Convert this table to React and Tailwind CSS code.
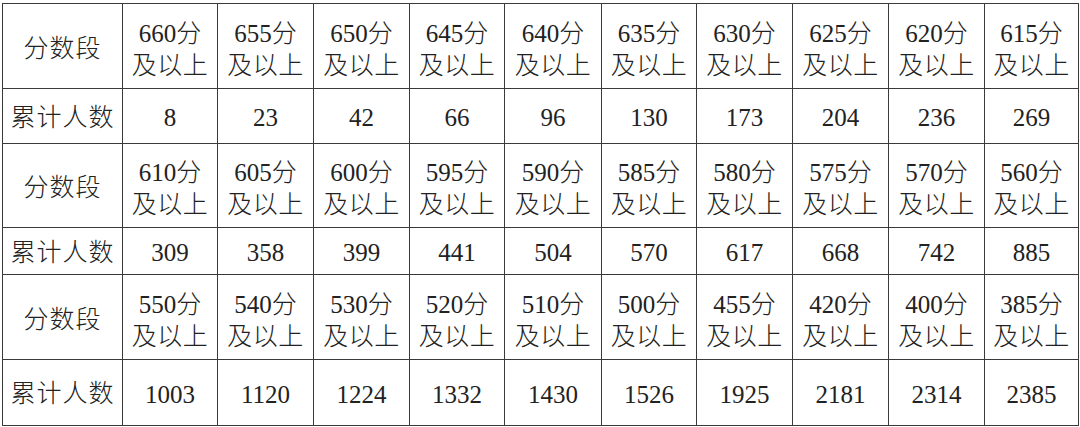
import { Fragment } from 'react'

const widths = [120, 95, 96, 96, 95, 97, 95, 96, 96, 96, 94]

const blocks = [
  {
    scores: [660, 655, 650, 645, 640, 635, 630, 625, 620, 615],
    counts: [8, 23, 42, 66, 96, 130, 173, 204, 236, 269],
    h1: 'h-[85px]',
    h2: 'h-[55px]',
  },
  {
    scores: [610, 605, 600, 595, 590, 585, 580, 575, 570, 560],
    counts: [309, 358, 399, 441, 504, 570, 617, 668, 742, 885],
    h1: 'h-[84px]',
    h2: 'h-[47px]',
  },
  {
    scores: [550, 540, 530, 520, 510, 500, 455, 420, 400, 385],
    counts: [1003, 1120, 1224, 1332, 1430, 1526, 1925, 2181, 2314, 2385],
    h1: 'h-[85px]',
    h2: 'h-[66px]',
  },
]

const cell = 'border border-[#3a3a3a] text-center align-middle p-0 text-[25px] leading-[32px] font-light'

export default function App() {
  return (
    <div
      className="bg-white w-[1080px] h-[427px] pt-[3px] pl-[2px] text-[#222]"
      style={{ fontFamily: '"Liberation Serif", "Noto Sans CJK SC", serif' }}
    >
      <table className="table-fixed border-collapse w-[1077px]">
        <colgroup>
          {widths.map((w, i) => (
            <col key={i} style={{ width: w }} />
          ))}
        </colgroup>
        <tbody>
          {blocks.map((b, bi) => (
            <Fragment key={bi}>
              <tr className={b.h1}>
                <td className={cell + ' tracking-[1px] pt-[5px]'}>分数段</td>
                {b.scores.map((s) => (
                  <td key={s} className={cell + ' pt-[7px]'}>
                    <div>{s}分</div>
                    <div className="tracking-[0.5px]">及以上</div>
                  </td>
                ))}
              </tr>
              <tr className={b.h2}>
                <td className={cell + ' tracking-[1px] pt-[3px]'}>累计人数</td>
                {b.counts.map((c) => (
                  <td key={c} className={cell + ' pt-[4px]'}>
                    {c}
                  </td>
                ))}
              </tr>
            </Fragment>
          ))}
        </tbody>
      </table>
    </div>
  )
}
